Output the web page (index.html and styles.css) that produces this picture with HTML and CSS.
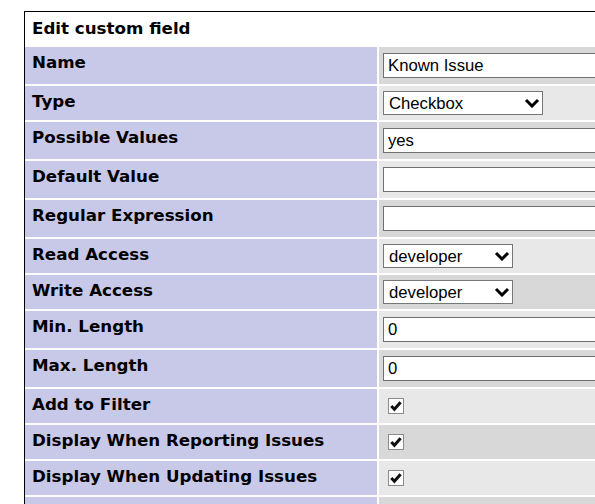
FILE: index.html
```html
<!DOCTYPE html>
<html lang="en">
<head>
  <meta charset="UTF-8" />
  <meta name="viewport" content="width=device-width, initial-scale=1.0"/>
  <title>Edit custom field</title>
  <link rel="stylesheet" href="styles.css">
</head>
<body>

  <form class="form-box" onsubmit="return false">
    <div class="form-title">Edit custom field</div>

    <div class="row row-1 tall">
      <div class="category">Name</div>
      <div class="value"><input type="text" class="text" value="Known Issue"></div>
    </div>

    <div class="row row-2">
      <div class="category">Type</div>
      <div class="value">
        <span class="select wide">
          <select>
            <option>String</option>
            <option>Numeric</option>
            <option selected>Checkbox</option>
            <option>List</option>
          </select>
          <svg class="chevron" viewBox="0 0 16 10"><path d="M2 2 L8 8 L14 2"/></svg>
        </span>
      </div>
    </div>

    <div class="row row-1 tall">
      <div class="category">Possible Values</div>
      <div class="value"><input type="text" class="text" value="yes"></div>
    </div>

    <div class="row row-2 tall">
      <div class="category">Default Value</div>
      <div class="value"><input type="text" class="text" value=""></div>
    </div>

    <div class="row row-1 tall">
      <div class="category">Regular Expression</div>
      <div class="value"><input type="text" class="text" value=""></div>
    </div>

    <div class="row row-2">
      <div class="category">Read Access</div>
      <div class="value">
        <span class="select">
          <select>
            <option>viewer</option>
            <option>reporter</option>
            <option selected>developer</option>
            <option>manager</option>
          </select>
          <svg class="chevron" viewBox="0 0 16 10"><path d="M2 2 L8 8 L14 2"/></svg>
        </span>
      </div>
    </div>

    <div class="row row-1">
      <div class="category">Write Access</div>
      <div class="value">
        <span class="select">
          <select>
            <option>viewer</option>
            <option>reporter</option>
            <option selected>developer</option>
            <option>manager</option>
          </select>
          <svg class="chevron" viewBox="0 0 16 10"><path d="M2 2 L8 8 L14 2"/></svg>
        </span>
      </div>
    </div>

    <div class="row row-2 tall">
      <div class="category">Min. Length</div>
      <div class="value"><input type="text" class="text" value="0"></div>
    </div>

    <div class="row row-1 tall">
      <div class="category">Max. Length</div>
      <div class="value"><input type="text" class="text" value="0"></div>
    </div>

    <div class="row row-2">
      <div class="category">Add to Filter</div>
      <div class="value">
        <span class="check"><svg viewBox="0 0 14 14"><path d="M2.3 7 L5.4 10.3 L11.6 3.2"/></svg></span>
      </div>
    </div>

    <div class="row row-1">
      <div class="category">Display When Reporting Issues</div>
      <div class="value">
        <span class="check"><svg viewBox="0 0 14 14"><path d="M2.3 7 L5.4 10.3 L11.6 3.2"/></svg></span>
      </div>
    </div>

    <div class="row row-2">
      <div class="category">Display When Updating Issues</div>
      <div class="value">
        <span class="check"><svg viewBox="0 0 14 14"><path d="M2.3 7 L5.4 10.3 L11.6 3.2"/></svg></span>
      </div>
    </div>

    <!-- next row starts just at the bottom of the frame -->
    <div class="row row-1">
      <div class="category"></div>
      <div class="value"></div>
    </div>
  </form>

</body>
</html>
```

FILE: styles.css
```css
* {
  box-sizing: border-box;
}

body {
  margin: 0;
  padding: 11px 0 0 24px;
  background-color: #ffffff;
  color: #000000;
  font-family: "DejaVu Sans", Verdana, sans-serif;
  font-size: 16.7px;
}

/* outer box: white shows through the 2px gaps between rows and cells */
.form-box {
  display: flex;
  flex-direction: column;
  gap: 2px;
  width: 720px;
  border: 1px solid #000000;
  background-color: #ffffff;
  margin: 0;
}

.form-title {
  height: 33px;
  padding: 0 7px 2px;
  display: flex;
  align-items: center;
  font-weight: bold;
}

.row {
  display: grid;
  grid-template-columns: 352px 1fr;
  column-gap: 2px;
  height: 34px;
}

.row.tall {
  height: 37px;
}

.category {
  background-color: #c8c8e8;
  font-weight: bold;
  padding: 5px 7px 0;
}

.value {
  display: flex;
  align-items: center;
  padding: 0 4px;
}

.row-1 .value {
  background-color: #d8d8d8;
}

.row-2 .value {
  background-color: #e8e8e8;
}

input.text {
  width: 320px;
  height: 25px;
  border: 1px solid #707070;
  background: #ffffff;
  padding: 0 4px;
  font-family: "Liberation Sans", Arial, sans-serif;
  font-size: 16.7px;
  color: #000000;
  outline: none;
}

/* select with a drawn chevron on top */
.select {
  position: relative;
  display: inline-block;
  width: 130px;
  height: 24px;
}

.select.wide {
  width: 160px;
}

.select select {
  appearance: none;
  -webkit-appearance: none;
  width: 100%;
  height: 100%;
  border: 1px solid #767676;
  border-radius: 0;
  background: #ffffff;
  padding: 0 24px 0 5px;
  font-family: "Liberation Sans", Arial, sans-serif;
  font-size: 16.7px;
  color: #000000;
  outline: none;
}

.chevron {
  position: absolute;
  right: 3px;
  top: 7px;
  width: 16px;
  height: 10px;
  pointer-events: none;
}

.chevron path {
  fill: none;
  stroke: #000000;
  stroke-width: 3;
}

.check {
  display: inline-block;
  width: 16px;
  height: 16px;
  margin-left: 5px;
  border: 1px solid #8a8a8a;
  background: #ffffff;
}

.check svg {
  display: block;
  width: 14px;
  height: 14px;
}

.check path {
  fill: none;
  stroke: #111111;
  stroke-width: 3;
}
```
